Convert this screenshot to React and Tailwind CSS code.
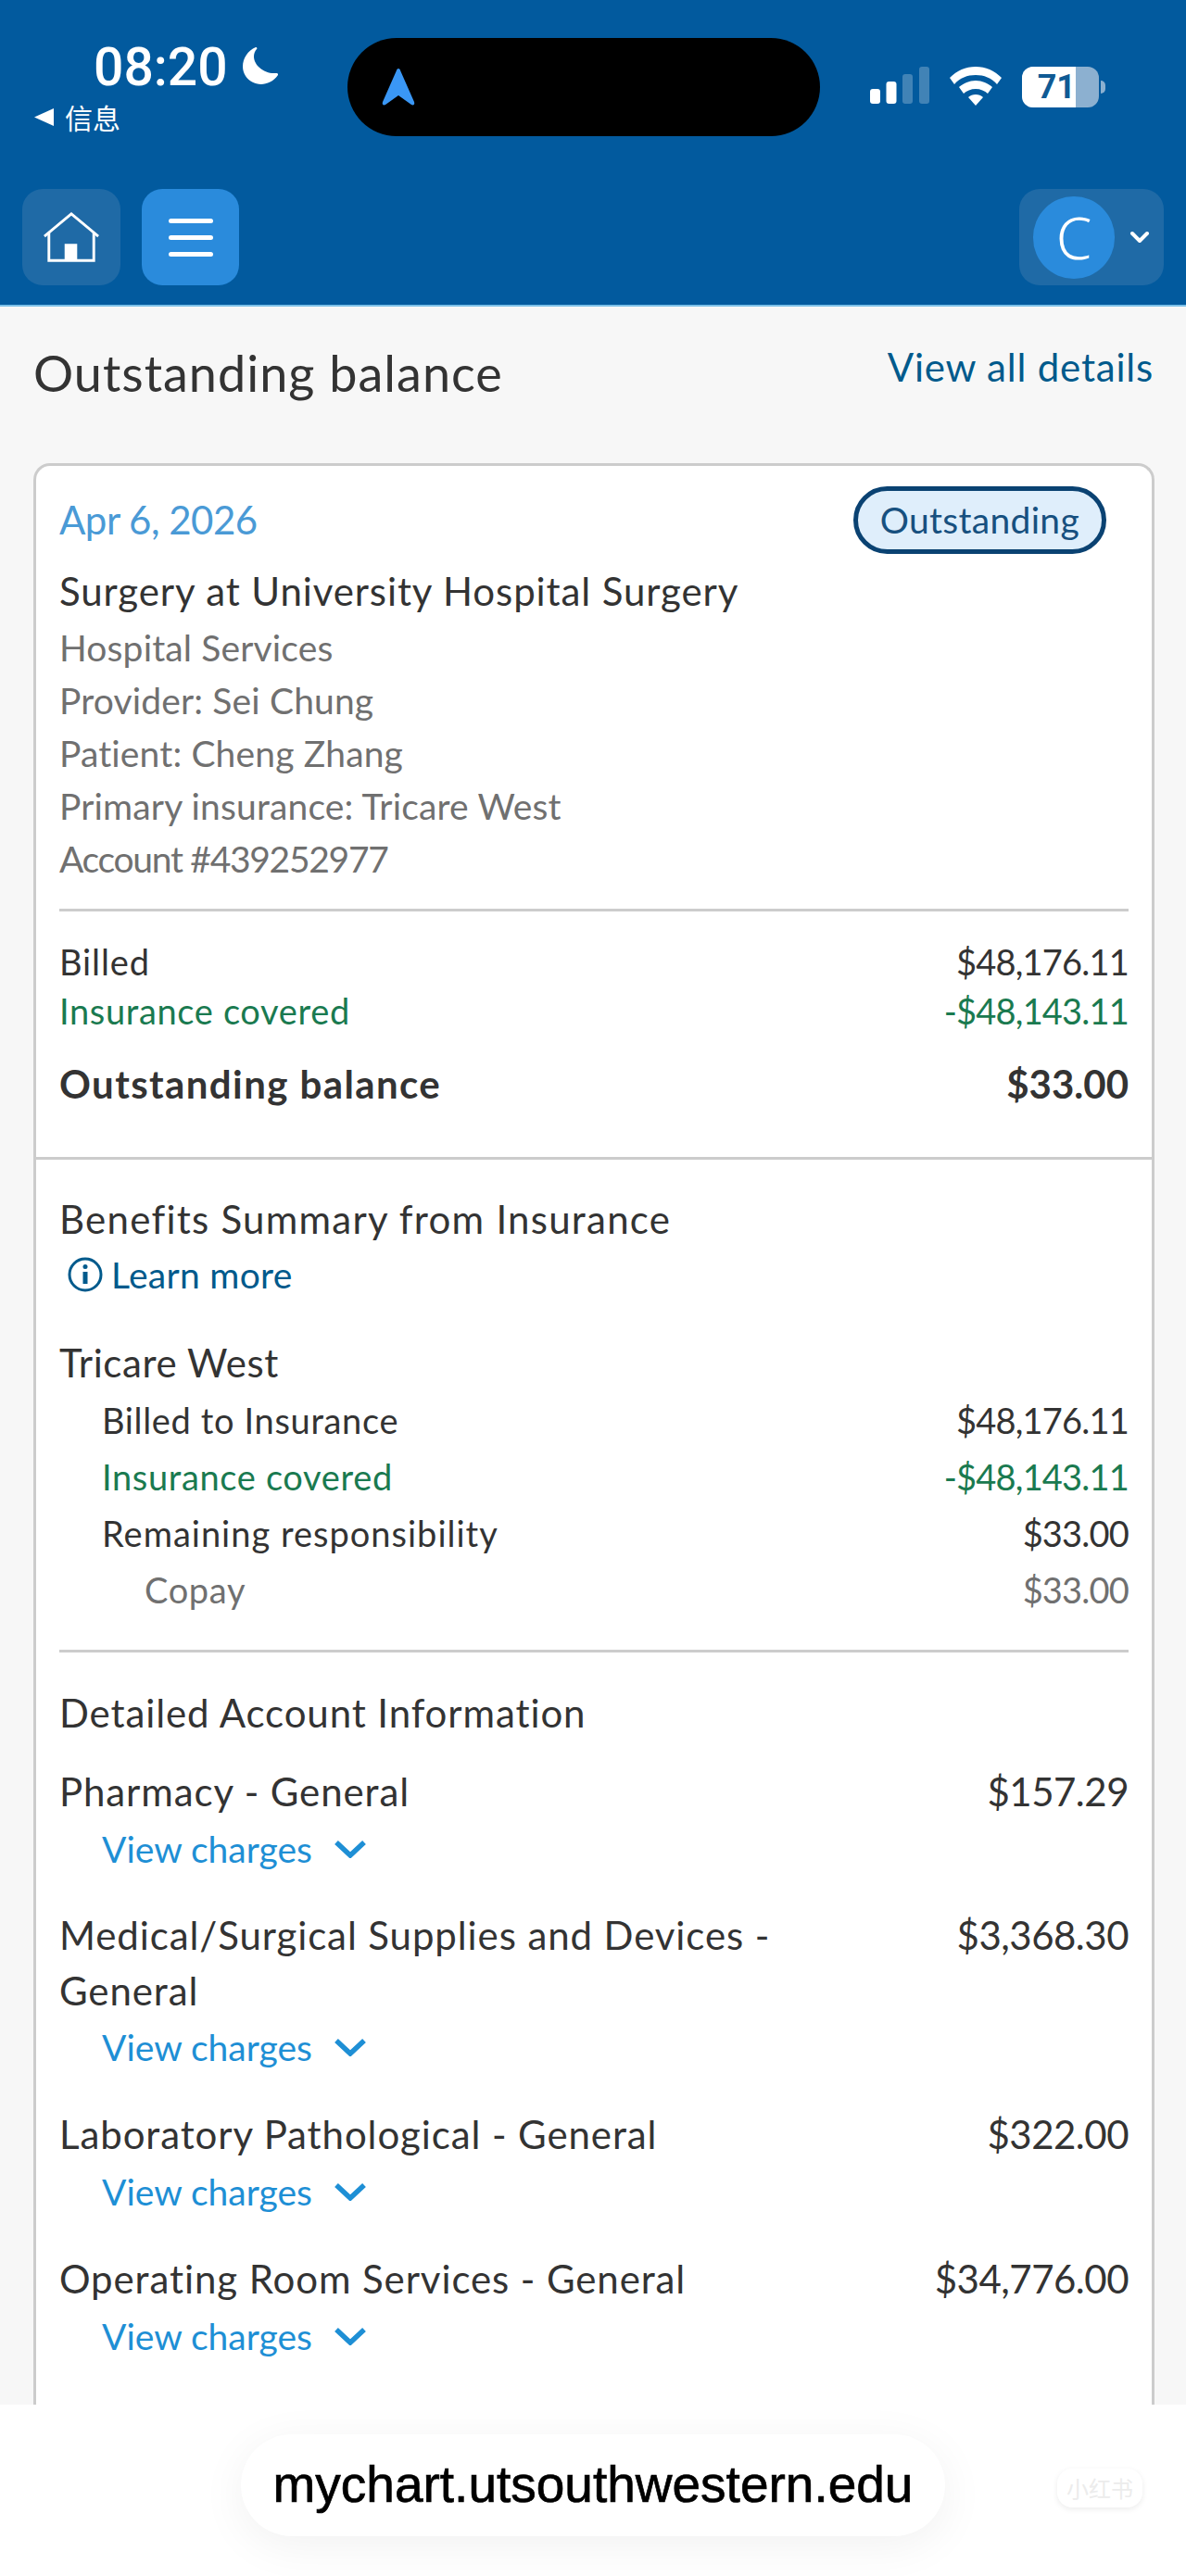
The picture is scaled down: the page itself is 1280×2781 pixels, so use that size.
import React from 'react';
import { ChevronDown } from 'lucide-react';

const sans = "font-['Lato','Noto_Sans','Noto_Sans_CJK_SC',sans-serif] [font-variant-ligatures:none]";

function Amount({ label, value, color = 'text-[#333]', indent = '', rowClass = 'h-[61px]', labelClass = 'tracking-[0.65px]' }) {
    return (
        <div className={`flex items-center justify-between text-[38px] ${rowClass} ${color} ${indent}`}>
            <span className={labelClass}>{label}</span>
            <span className="tracking-[-0.8px]">{value}</span>
        </div>
    );
}

function ChargeRow({ lines, value, leading = 'leading-[62px]' }) {
    return (
        <div className="mb-[32px]">
            <div className={`flex justify-between text-[42px] text-[#333] ${leading}`}>
                <div className="w-[860px] tracking-[0.9px]">{lines}</div>
                <span className="tracking-[-0.5px]">{value}</span>
            </div>
            <div className="flex items-center h-[62px] pl-[46px] text-[39px] text-[#1e8fd5]">
                <span>View charges</span>
                <svg viewBox="0 0 34 20" className="ml-[24px] w-[34px] h-[20px]" fill="none" stroke="#1e8fd5" strokeWidth="5.5">
                    <path d="M2 3l15 14L32 3" />
                </svg>
            </div>
        </div>
    );
}

export default function App() {
    return (
        <div className={`flex flex-col h-[2781px] w-[1280px] overflow-hidden bg-[#f7f7f7] ${sans}`}>
            <header className="shrink-0 h-[331px] bg-[#025a9e] border-b-2 border-[#7cc0e8]">
                <div className="flex h-[204px]">
                    <div className="w-[375px] pt-[36px] pl-[37px] text-white">
                        <div className="flex items-center h-[72px] pl-[64px]">
                            <span className="font-['Roboto',sans-serif] font-medium text-[57px] leading-none">08:20</span>
                            <svg viewBox="0 0 40 42" className="ml-[14px] w-[40px] h-[42px]" fill="#fff">
                                <path d="M16 0C4 5-2 20 5 31c7 11 25 13 35-1 1-2-2-2-3-2C26 29 14 20 14 10c0-3 1-6 3-8 1-1 0-2-1-2z" />
                            </svg>
                        </div>
                        <div className="flex items-center h-[36px]">
                            <svg viewBox="0 0 21 19" className="w-[21px] h-[19px]" fill="#fff"><path d="M0 9.5L21 0v19z" /></svg>
                            <span className="ml-[12px] text-[30px] leading-none font-['Noto_Sans_CJK_SC',sans-serif]">信息</span>
                        </div>
                    </div>
                    <div className="flex items-center mt-[41px] w-[510px] h-[106px] pl-[37px] rounded-[53px] bg-black">
                        <svg viewBox="0 0 36 40" className="w-[36px] h-[40px]" fill="#3a97f5">
                            <path d="M18 0c1 0 2 1 2 2l15 34c1 3-1 4-3 3L18 29 4 39c-2 1-4 0-3-3L16 2c0-1 1-2 2-2z" />
                        </svg>
                    </div>
                    <div className="flex items-start pt-[72px] pl-[54px]">
                        <svg viewBox="0 0 64 40" className="w-[64px] h-[40px]" fill="#fff">
                            <rect x="0" y="24" width="11" height="16" rx="3" />
                            <rect x="17.500" y="16" width="11" height="24" rx="3" />
                            <rect x="35" y="8" width="11" height="32" rx="3" opacity=".25" />
                            <rect x="53" y="0" width="11" height="40" rx="3" opacity=".25" />
                        </svg>
                        <svg viewBox="0 0 56 42" className="ml-[22px] w-[56px] h-[42px]" fill="#fff">
                            <path d="M28 0c11 0 20 4 28 12l-5 7C45 12 37 9 28 9S11 12 5 19L0 12C8 4 17 0 28 0z" />
                            <path d="M28 15c7 0 13 3 18 7l-5 7c-3-3-8-5-13-5s-10 2-13 5l-5-7c5-4 11-7 18-7z" />
                            <path d="M28 30c3 0 6 1 8 3l-8 9-8-9c2-2 5-3 8-3z" />
                        </svg>
                        <div className="flex items-center ml-[22px]">
                            <div className="flex w-[83px] h-[44px] rounded-[12px] overflow-hidden bg-[#8cb0d0]">
                                <div className="flex items-center justify-end w-[58px] bg-white text-[#0f5a94] font-['Roboto',sans-serif] font-bold text-[36px] leading-none">71</div>
                            </div>
                            <div className="ml-[2px] w-[5px] h-[14px] rounded-r-full bg-[#8cb0d0]"></div>
                        </div>
                    </div>
                </div>
                <nav className="flex h-[104px] pl-[24px] pr-[24px]">
                    <button className="flex items-center justify-center w-[106px] h-[104px] rounded-[22px] bg-[#1f6aa6]">
                        <svg viewBox="0 0 64 56" className="w-[62px] h-[56px]" fill="none" stroke="#fff" strokeWidth="3">
                            <path d="M2 27L32 2l30 25" />
                            <path d="M7 23v31h50V23" />
                            <path d="M26 54V37h11v17" fill="#fff" />
                        </svg>
                    </button>
                    <button className="flex flex-col items-center justify-center gap-[13px] ml-[23px] w-[105px] h-[104px] rounded-[22px] bg-[#2a8bdc]">
                        <span className="w-[48px] h-[5px] rounded-full bg-white"></span>
                        <span className="w-[48px] h-[5px] rounded-full bg-white"></span>
                        <span className="w-[48px] h-[5px] rounded-full bg-white"></span>
                    </button>
                    <button className="flex items-center ml-auto pl-[15px] w-[156px] h-[104px] rounded-[22px] bg-[#1f6aa6]">
                        <span className="flex items-center justify-center w-[88px] h-[89px] rounded-full bg-[#2a8bdc] text-white font-['Noto_Sans',sans-serif] text-[62px] font-light leading-none">C</span>
                        <ChevronDown className="ml-[11px] w-[32px] h-[32px] text-white" strokeWidth={3} />
                    </button>
                </nav>
            </header>

            <main className="flex-1 min-h-0 overflow-hidden pl-[36px] pr-[34px]">
                <div className="flex items-start justify-between h-[169px] pt-[31px] pr-[1px]">
                    <h1 className="text-[54px] font-normal text-[#333] tracking-[1px]">Outstanding balance</h1>
                    <a className="mt-[3px] text-[42px] text-[#005a8c] tracking-[0.8px]">View all details</a>
                </div>
                <section className="pb-[200px] rounded-t-[18px] border-[3px] border-b-0 border-[#ccc] bg-white">
                    <div className="px-[25px] pt-[22px]">
                        <div className="flex items-center justify-between h-[72px] pr-[24px]">
                            <span className="text-[42px] text-[#4a9ad6] tracking-[-0.5px]">Apr 6, 2026</span>
                            <span className="flex items-center h-[73px] px-[24px] rounded-full border-[5px] border-[#0a4272] bg-[#dfeefb] text-[39px] text-[#17507f] tracking-[0.3px]">Outstanding</span>
                        </div>
                        <div className="mt-[10px] text-[42px] leading-[62px] text-[#333] tracking-[0.9px]">Surgery at University Hospital Surgery</div>
                        <div className="mt-[2px] text-[39px] leading-[57px] text-[#707070] tracking-[0.15px]">
                            <div>Hospital Services</div>
                            <div>Provider: Sei Chung</div>
                            <div>Patient: Cheng Zhang</div>
                            <div>Primary insurance: Tricare West</div>
                            <div className="tracking-[-1.3px]">Account #439252977</div>
                        </div>
                        <div className="mt-[25px] pt-[26px] pb-[25px] border-t-[3px] border-[#ccc]">
                            <Amount label="Billed" value="$48,176.11" rowClass="h-[56px]" labelClass="tracking-[0.9px]" />
                            <Amount label="Insurance covered" value="-$48,143.11" color="text-[#1a7a50]" rowClass="h-[50px]" />
                            <div className="flex items-center justify-between h-[108px] text-[42px] font-bold text-[#333]">
                                <span className="tracking-[1.4px]">Outstanding balance</span>
                                <span>$33.00</span>
                            </div>
                        </div>
                    </div>
                    <div className="border-t-[3px] border-[#ccc] px-[25px] pt-[34px]">
                        <div className="text-[42px] leading-[60px] text-[#333] tracking-[1.25px]">Benefits Summary from Insurance</div>
                        <div className="flex items-center h-[60px] pl-[9px] text-[39px] text-[#005a8c]">
                            <svg viewBox="0 0 38 38" className="w-[38px] h-[38px]" fill="none" stroke="#005a8c" strokeWidth="3">
                                <circle cx="19" cy="19" r="17" />
                                <circle cx="19" cy="10.500" r="2.500" fill="#005a8c" stroke="none" />
                                <path d="M19 16v13" strokeWidth="5" />
                            </svg>
                            <span className="ml-[9px] tracking-[0.3px]">Learn more</span>
                        </div>
                        <div className="mt-[35px] mb-[2px] text-[42px] leading-[60px] text-[#333] tracking-[0.6px]">Tricare West</div>
                        <Amount label="Billed to Insurance" value="$48,176.11" indent="pl-[46px]" />
                        <Amount label="Insurance covered" value="-$48,143.11" color="text-[#1a7a50]" indent="pl-[46px]" />
                        <Amount label="Remaining responsibility" value="$33.00" indent="pl-[46px]" labelClass="tracking-[1px]" />
                        <Amount label="Copay" value="$33.00" color="text-[#707070]" indent="pl-[92px]" />
                        <div className="mt-[34px] pt-[35px] border-t-[3px] border-[#ccc]">
                            <div className="mb-[24px] text-[42px] leading-[60px] text-[#333] tracking-[0.9px]">Detailed Account Information</div>
                            <ChargeRow lines="Pharmacy - General" value="$157.29" />
                            <ChargeRow lines="Medical/Surgical Supplies and Devices - General" value="$3,368.30" leading="leading-[60px]" />
                            <ChargeRow lines="Laboratory Pathological - General" value="$322.00" />
                            <ChargeRow lines="Operating Room Services - General" value="$34,776.00" />
                        </div>
                    </div>
                </section>
            </main>

            <footer className="relative flex shrink-0 items-center justify-center h-[185px] bg-white">
                <div className="flex items-center justify-center w-[760px] h-[110px] mb-[12px] rounded-[55px] bg-white shadow-[0_10px_50px_rgba(0,0,0,0.06)] font-['Liberation_Sans',sans-serif] text-[55px] text-black [-webkit-text-stroke:0.7px_black]">
                    mychart.utsouthwestern.edu
                </div>
                <div className="absolute left-[1141px] top-[69px] flex items-center justify-center w-[92px] h-[42px] rounded-[16px] bg-white shadow-[0_2px_6px_rgba(0,0,0,0.08)] font-['Noto_Sans_CJK_SC',sans-serif] text-[24px] text-[#ececec]">小红书</div>
            </footer>
        </div>
    );
}
